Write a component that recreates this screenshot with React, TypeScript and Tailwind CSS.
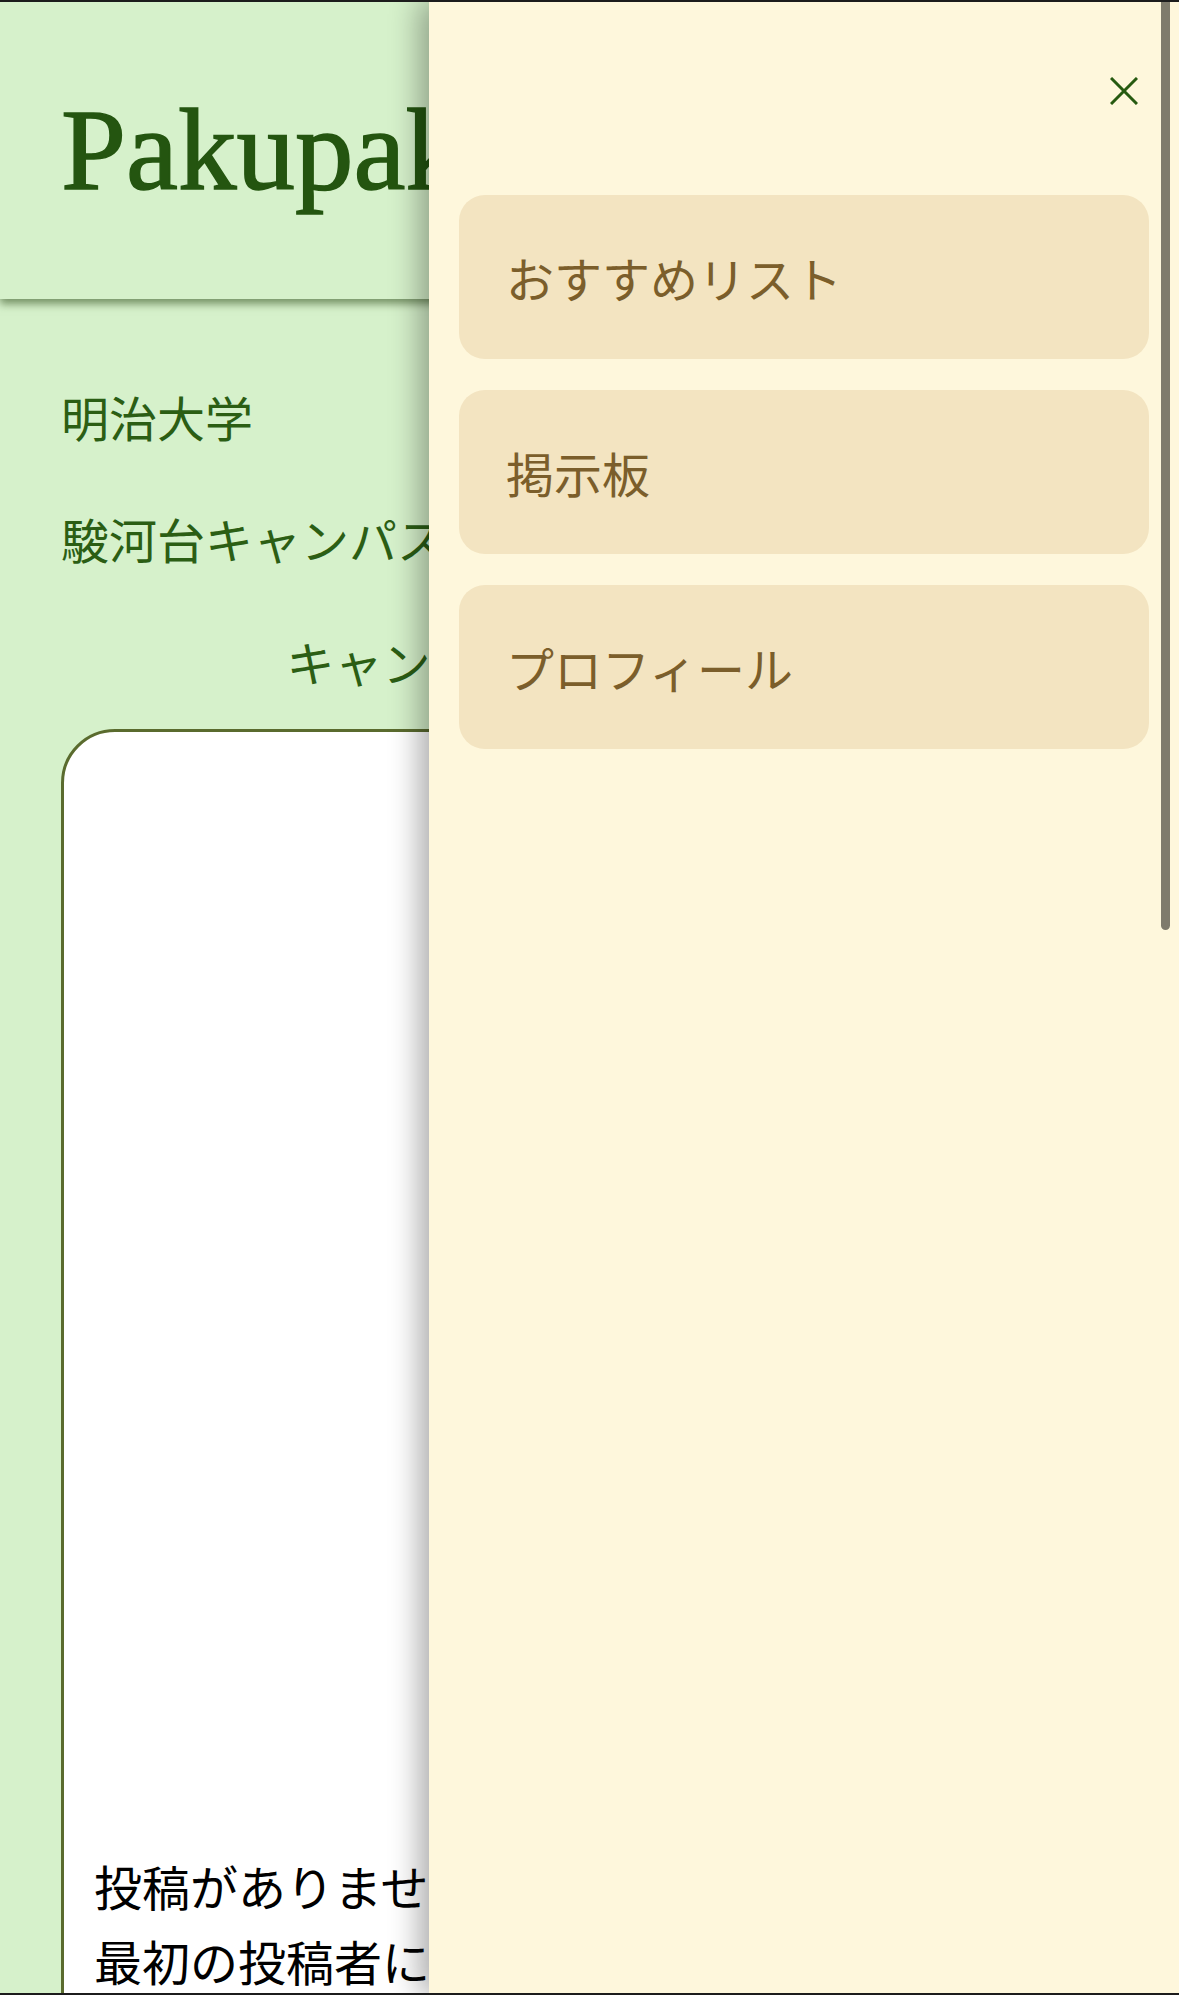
const menuItems = ['おすすめリスト', '掲示板', 'プロフィール'];

const jp = { fontFamily: '"Noto Sans CJK JP", "Noto Sans", sans-serif' };

const App = () => {
  return (
    <div className="relative w-full h-[1995px] overflow-hidden bg-[#d6f1cb]" style={jp}>
      {/* Header */}
      <header className="relative z-10 h-[299px] bg-[#d6f1cb] flex items-center px-[61px] shadow-[0_5px_8px_rgba(40,70,20,0.55)]">
        <h1
          className="text-[117px] leading-none text-[#245510] [-webkit-text-stroke:1.5px_#245510]"
          style={{ fontFamily: '"Liberation Serif", "Noto Sans CJK JP", serif' }}
        >
          Pakupaku
        </h1>
      </header>

      {/* Main */}
      <main className="px-[61px] pt-[81px]">
        <p className="text-[48px] leading-[72px] text-[#2b5e14]">明治大学</p>
        <p className="mt-[50px] text-[48px] leading-[72px] text-[#2b5e14] whitespace-nowrap">駿河台キャンパス</p>
        <p className="mt-[51px] pr-[30px] text-[48px] leading-[72px] text-[#2b5e14] text-center whitespace-nowrap">キャンパスの変更はこちら</p>

        <div className="mt-[32px] bg-white border-[3px] border-[#5a6b2e] rounded-[54px] pb-[80px]">
          <div className="h-[1116px]" />
          <div className="px-[30px] text-[48px] leading-[75px] text-black">
            <p>投稿がありません。</p>
            <p>最初の投稿者になりましょう！</p>
          </div>
        </div>
      </main>

      {/* Drawer */}
      <aside className="absolute z-20 top-0 bottom-0 left-[429px] right-0 bg-[#fef7dc] shadow-[-10px_0_28px_rgba(0,0,0,0.32)] px-[30px] pt-[77px]">
        <div className="flex justify-end pr-[11px]">
          <button className="w-[28px] h-[28px]" aria-label="閉じる">
            <svg viewBox="0 0 28 28" className="w-[28px] h-[28px]">
              <path d="M1 1 L27 27 M27 1 L1 27" stroke="#265a10" strokeWidth="3" fill="none" />
            </svg>
          </button>
        </div>
        <nav className="mt-[90px] flex flex-col gap-[31px]">
          {menuItems.map((item) => (
            <a
              key={item}
              className="h-[164px] rounded-[26px] bg-[#f3e4c1] flex items-center pl-[47px] text-[48px] text-[#7b5e2b]"
            >
              {item}
            </a>
          ))}
        </nav>
        <div className="absolute top-0 right-[9px] w-[9px] h-[930px] rounded-b-full bg-[#7f7b6c]" />
      </aside>

      {/* screen edges */}
      <div className="absolute z-30 top-0 left-0 right-0 h-[2px] bg-[#1c1c1c]" />
      <div className="absolute z-30 bottom-0 left-0 right-0 h-[2px] bg-[#1c1c1c]" />
    </div>
  );
};

export default App;
